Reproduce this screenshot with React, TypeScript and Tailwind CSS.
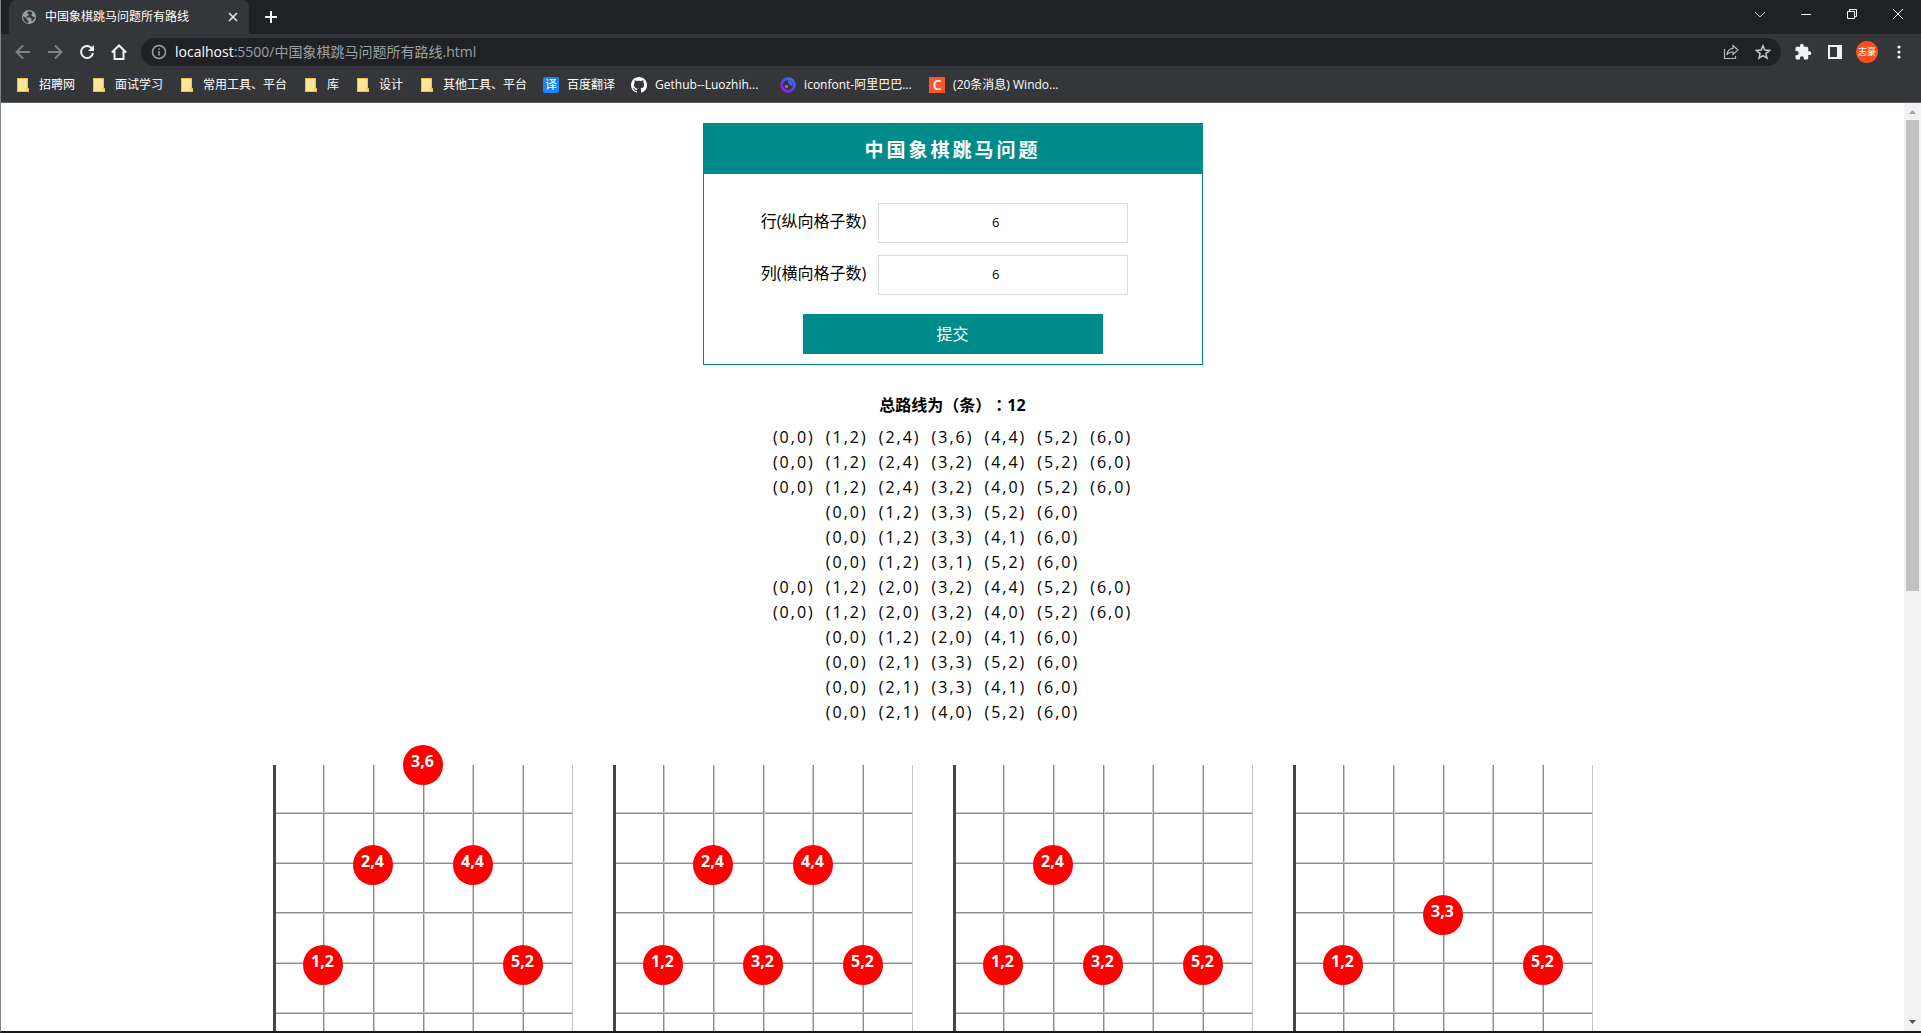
import React from "react";

type Point = [number, number];

const ROUTES: Point[][] = [
  [[0, 0], [1, 2], [2, 4], [3, 6], [4, 4], [5, 2], [6, 0]],
  [[0, 0], [1, 2], [2, 4], [3, 2], [4, 4], [5, 2], [6, 0]],
  [[0, 0], [1, 2], [2, 4], [3, 2], [4, 0], [5, 2], [6, 0]],
  [[0, 0], [1, 2], [3, 3], [5, 2], [6, 0]],
  [[0, 0], [1, 2], [3, 3], [4, 1], [6, 0]],
  [[0, 0], [1, 2], [3, 1], [5, 2], [6, 0]],
  [[0, 0], [1, 2], [2, 0], [3, 2], [4, 4], [5, 2], [6, 0]],
  [[0, 0], [1, 2], [2, 0], [3, 2], [4, 0], [5, 2], [6, 0]],
  [[0, 0], [1, 2], [2, 0], [4, 1], [6, 0]],
  [[0, 0], [2, 1], [3, 3], [5, 2], [6, 0]],
  [[0, 0], [2, 1], [3, 3], [4, 1], [6, 0]],
  [[0, 0], [2, 1], [4, 0], [5, 2], [6, 0]],
];

const CELL = 50;

function GlobeIcon() {
  return (
    <svg viewBox="0 0 16 16" className="size-4 shrink-0">
      <circle cx="8" cy="8" r="7" fill="#9aa0a6" />
      <path
        d="M2.2 7.2 5.6 9v1.6l1.8 1.2v2.4C4.4 13.9 2.2 11.2 2.2 8zM8.3 2.2C6.5 3 5.8 3.4 6.2 4.6l1.6.6-.6 1.6-2 .4L6.6 8.4h2.6l1.4 1.4-.4 2 1 .4c1.6-1.2 2.4-2.6 2.5-4.2l-2.3-.6-1.2-1.6 1.4-1.8C10.8 2.9 9.6 2.3 8.3 2.2z"
        fill="#35363a"
      />
    </svg>
  );
}

function FolderIcon() {
  return (
    <svg viewBox="0 0 16 16" className="size-4 shrink-0">
      <path d="M2 1h11v10h1v4H2z" fill="#e8c44d" />
      <path d="M3 2h9v9h-1v3H3z" fill="#ffe694" />
      <path d="M12 12h1v2h-1z" fill="#ffe694" />
    </svg>
  );
}

function GithubIcon() {
  return (
    <svg viewBox="0 0 16 16" className="size-4 shrink-0" fill="#fff">
      <path d="M8 0C3.580 0 0 3.580 0 8c0 3.540 2.290 6.530 5.470 7.590.4.070.550-.170.550-.380 0-.190-.010-.820-.010-1.490-2.010.370-2.530-.490-2.690-.940-.090-.230-.480-.940-.820-1.130-.280-.150-.680-.520-.010-.530.630-.010 1.080.580 1.230.820.720 1.210 1.870.870 2.330.660.070-.520.280-.870.510-1.070-1.780-.2-3.640-.890-3.640-3.950 0-.870.310-1.590.820-2.150-.080-.2-.360-1.020.080-2.120 0 0 .670-.210 2.200.820.640-.180 1.320-.270 2-.270s1.360.090 2 .270c1.530-1.040 2.200-.820 2.200-.820.440 1.100.160 1.920.080 2.120.510.560.820 1.270.820 2.150 0 3.070-1.870 3.750-3.650 3.950.290.250.540.730.540 1.480 0 1.070-.010 1.930-.010 2.200 0 .210.150.460.550.380A8.010 8.010 0 0 0 16 8c0-4.420-3.580-8-8-8" />
    </svg>
  );
}

function IconfontIcon() {
  return (
    <svg viewBox="0 0 16 16" className="size-4 shrink-0">
      <defs>
        <linearGradient id="ring" x1="1" y1="0" x2="0" y2="1">
          <stop offset="0" stopColor="#2f7df6" />
          <stop offset="0.5" stopColor="#5b3ff0" />
          <stop offset="1" stopColor="#a311f5" />
        </linearGradient>
      </defs>
      <circle cx="8" cy="8" r="6.4" fill="none" stroke="url(#ring)" strokeWidth="2.6" />
      <path d="M8 2.500a5.500 5.500 0 0 1 4.500 7L8.500 7z" fill="#3b63f3" />
      <circle cx="6.500" cy="9.500" r="1.700" fill="#e33fd0" />
    </svg>
  );
}

function TileIcon({ text, tone }: { text: string; tone: string }) {
  return (
    <span className={`flex size-4 shrink-0 items-center justify-center text-white ${tone}`}>{text}</span>
  );
}

const BOOKMARKS: { label: string; icon: React.ReactNode; long?: boolean }[] = [
  { label: "招聘网", icon: <FolderIcon /> },
  { label: "面试学习", icon: <FolderIcon /> },
  { label: "常用工具、平台", icon: <FolderIcon /> },
  { label: "库", icon: <FolderIcon /> },
  { label: "设计", icon: <FolderIcon /> },
  { label: "其他工具、平台", icon: <FolderIcon /> },
  { label: "百度翻译", icon: <TileIcon text="译" tone="rounded-xs bg-[#1a84f7] text-xs" /> },
  { label: "Gethub--Luozhih...", icon: <GithubIcon />, long: true },
  { label: "iconfont-阿里巴巴...", icon: <IconfontIcon />, long: true },
  {
    label: "(20条消息) Windo...",
    icon: <TileIcon text="C" tone="bg-[#fc5531] text-sm font-semibold" />,
    long: true,
  },
];

function TabStrip() {
  return (
    <div className="flex h-[34px] items-stretch bg-[#202124] pl-2">
      <div className="flex w-60 items-center gap-2 rounded-t-lg bg-[#35363a] pr-2 pl-3 text-xs text-white">
        <GlobeIcon />
        <span className="grow whitespace-nowrap">中国象棋跳马问题所有路线</span>
        <button aria-label="关闭标签页" className="flex size-4 items-center justify-center">
          <svg viewBox="0 0 16 16" className="size-4" stroke="#e8eaed" strokeWidth="1.6">
            <path d="M4 4l8 8M12 4l-8 8" />
          </svg>
        </button>
      </div>
      <button aria-label="新标签页" className="flex w-11 items-center justify-center">
        <svg viewBox="0 0 16 16" className="size-4" stroke="#fff" strokeWidth="2">
          <path d="M8 2v12M2 8h12" />
        </svg>
      </button>
      <div className="ml-auto flex h-7 text-white">
        <button aria-label="搜索标签页" className="flex w-[46px] items-center justify-center">
          <svg viewBox="0 0 12 12" className="size-3" fill="none" stroke="#c4c7cb">
            <path d="M1 4l5 5 5-5" />
          </svg>
        </button>
        <button aria-label="最小化" className="flex w-[46px] items-center justify-center">
          <svg viewBox="0 0 10 10" className="size-[10px]" stroke="currentColor">
            <path d="M0 5.500h10" />
          </svg>
        </button>
        <button aria-label="还原" className="flex w-[46px] items-center justify-center">
          <svg viewBox="0 0 10 10" className="size-[10px]" fill="none" stroke="currentColor">
            <path d="M.5 2.500h7v7h-7zM2.500 2.500v-2h7v7h-2" />
          </svg>
        </button>
        <button aria-label="关闭" className="flex w-[46px] items-center justify-center">
          <svg viewBox="0 0 10 10" className="size-[10px]" stroke="currentColor">
            <path d="M0 0l10 10M10 0L0 10" />
          </svg>
        </button>
      </div>
    </div>
  );
}

function ToolButton({ label, children }: { label: string; children: React.ReactNode }) {
  return (
    <button aria-label={label} className="flex size-8 shrink-0 items-center justify-center">
      {children}
    </button>
  );
}

function Toolbar() {
  return (
    <div className="flex h-9 items-center bg-[#35363a] pr-[6px] pl-[6px]">
      <ToolButton label="后退">
        <svg viewBox="0 0 16 16" className="size-4" fill="none" stroke="#808387" strokeWidth="1.8">
          <path d="M15 8H2M8 1.500L1.500 8 8 14.500" />
        </svg>
      </ToolButton>
      <ToolButton label="前进">
        <svg viewBox="0 0 16 16" className="size-4" fill="none" stroke="#808387" strokeWidth="1.8">
          <path d="M1 8h13M8 1.500L14.500 8 8 14.500" />
        </svg>
      </ToolButton>
      <ToolButton label="重新加载">
        <svg viewBox="0 0 16 16" className="size-4" fill="none" stroke="#f1f3f4" strokeWidth="2">
          <path d="M13.200 4.800A6 6 0 1 0 14 9" />
          <path d="M15 1v6H9z" fill="#f1f3f4" stroke="none" />
        </svg>
      </ToolButton>
      <ToolButton label="主页">
        <svg viewBox="0 0 16 16" className="size-4" fill="none" stroke="#f1f3f4" strokeWidth="2">
          <path d="M.8 8.500L8 1.500l7.200 7M3.500 7v8h9V7" />
        </svg>
      </ToolButton>
      <div className="ml-[6px] flex h-7 min-w-0 grow items-center rounded-full bg-[#202124] pr-[2px] pl-[10px] text-sm">
        <svg viewBox="0 0 16 16" className="mr-2 size-4 shrink-0" fill="none" stroke="#9aa0a6" strokeWidth="1.5">
          <circle cx="8" cy="8" r="6.5" />
          <path d="M8 7v4.500M8 4.200v1.600" />
        </svg>
        <span className="grow whitespace-nowrap text-[#9aa0a6]">
          <span className="text-white">localhost</span>:5500/中国象棋跳马问题所有路线.html
        </span>
        <ToolButton label="分享">
          <svg viewBox="0 0 16 16" className="size-4" fill="none" stroke="#b4b7bb" strokeWidth="1.2">
            <path d="M1.500 5v9.500h11V12M10 1.500L15 6l-5 4.500V8C7 8 5 9 3.800 11 4.200 7.500 6.500 4.800 10 4.400z" />
          </svg>
        </ToolButton>
        <ToolButton label="收藏">
          <svg viewBox="0 0 16 16" className="size-4" fill="none" stroke="#c4c7cb" strokeWidth="1.5">
            <path d="M8 1.800l1.800 4.300 4.700.4-3.600 3.100 1.100 4.600L8 11.700l-4 2.500 1.100-4.600L1.500 6.500l4.700-.4z" />
          </svg>
        </ToolButton>
      </div>
      <div className="flex pl-[6px]">
        <ToolButton label="扩展程序">
          <svg viewBox="0 0 24 24" className="size-[18px]" fill="#f1f3f4">
            <path d="M20.500 11H19V7c0-1.100-.9-2-2-2h-4V3.500a2.500 2.500 0 0 0-5 0V5H4c-1.100 0-2 .9-2 2v3.800h1.500a2.700 2.700 0 0 1 0 5.400H2V20c0 1.100.9 2 2 2h3.800v-1.500a2.700 2.700 0 0 1 5.400 0V22H17c1.100 0 2-.9 2-2v-4h1.500a2.500 2.500 0 0 0 0-5z" />
          </svg>
        </ToolButton>
        <ToolButton label="侧边栏">
          <svg viewBox="0 0 14 14" className="size-[14px]">
            <path fillRule="evenodd" d="M0 0h14v14H0zM2 2v10h7V2z" fill="#f1f3f4" />
          </svg>
        </ToolButton>
        <ToolButton label="个人资料">
          <span className="flex size-[22px] items-center justify-center rounded-full bg-[#f4511e] text-[9px] text-white">
            志豪
          </span>
        </ToolButton>
        <ToolButton label="菜单">
          <svg viewBox="0 0 4 14" className="h-[14px] w-1" fill="#f1f3f4">
            <circle cx="2" cy="2" r="1.6" />
            <circle cx="2" cy="7" r="1.6" />
            <circle cx="2" cy="12" r="1.6" />
          </svg>
        </ToolButton>
      </div>
    </div>
  );
}

function BookmarkBar() {
  return (
    <nav className="flex h-[33px] items-center gap-4 border-b border-[#5f6063] bg-[#35363a] pb-[2px] pl-[14px] text-xs text-white">
      {BOOKMARKS.map((b) => (
        <a key={b.label} href="#" className="flex items-center gap-2 whitespace-nowrap">
          {b.icon}
          <span className={b.long ? "min-w-[109px]" : ""}>{b.label}</span>
        </a>
      ))}
    </nav>
  );
}

function Field({ id, label }: { id: string; label: string }) {
  return (
    <div className="flex items-center justify-center gap-3 pr-4">
      <label htmlFor={id} className="pb-1">
        {label}
      </label>
      <input
        id={id}
        type="number"
        defaultValue={6}
        className="h-10 w-[250px] border border-[#dcdcdc] pb-[2px] text-center text-[13px] outline-none"
      />
    </div>
  );
}

function SizeForm() {
  return (
    <form
      onSubmit={(e) => e.preventDefault()}
      className="w-[500px] border border-[#008b8b] pb-[10px]"
    >
      <h3 className="flex h-[50px] items-center justify-center bg-[#008b8b] pt-[2px] text-[19px] font-bold tracking-[3px] text-white">
        中国象棋跳马问题
      </h3>
      <div className="flex flex-col gap-3 pt-[29px]">
        <Field id="rows" label="行(纵向格子数)" />
        <Field id="cols" label="列(横向格子数)" />
      </div>
      <button className="mx-auto mt-[19px] block h-10 w-[300px] bg-[#008b8b] text-white">提交</button>
    </form>
  );
}

function Board({ route }: { route: Point[] }) {
  return (
    <div className="relative h-[300px] w-[300px]">
      <svg viewBox="0 0 300 300" className="size-full" shapeRendering="crispEdges">
        {[50, 100, 150, 200, 250].map((v) => (
          <g key={v}>
            <path d={`M${v < 200 ? v : v - 1} 0h1v300h-1z`} fill={v < 200 ? "#8c8c8c" : "#cccccc"} />
            <path d={`M${v < 200 ? v + 1 : v} 0h1v300h-1z`} fill={v < 200 ? "#cccccc" : "#8c8c8c"} />
            <path d={`M3 ${v - 3}h297v1H3z`} fill={v === 150 ? "#8c8c8c" : "#cccccc"} />
            <path d={`M3 ${v - 2}h297v1H3z`} fill={v === 150 ? "#cccccc" : "#8c8c8c"} />
          </g>
        ))}
        <path d="M299 0h1v300h-1z" fill="#c4c4c4" />
        <path d="M0 0h3v300H0zM0 297h300v3H0z" fill="#45464b" />
      </svg>
      {route
        .filter(([, y]) => y > 0)
        .map(([x, y]) => (
          <span
            key={`${x},${y}`}
            className="absolute size-10 -translate-x-1/2 translate-y-1/2 rounded-full bg-[#ff0000] text-center leading-8 font-bold text-white"
            style={{ left: x * CELL, bottom: y * CELL }}
          >
            {x},{y}
          </span>
        ))}
    </div>
  );
}

function ScrollBar() {
  return (
    <div className="flex w-[17px] shrink-0 flex-col items-center bg-[#f1f1f1]">
      <svg viewBox="0 0 17 17" className="size-[17px] shrink-0">
        <path d="M5 11l3.500-4 3.500 4z" fill="#a3a3a3" />
      </svg>
      <div className="flex w-full grow flex-col px-[2px]">
        <div className="h-[52.7%] bg-[#c1c1c1]" />
      </div>
      <svg viewBox="0 0 17 17" className="size-[17px] shrink-0">
        <path d="M5 6l3.500 4L12 6z" fill="#505050" />
      </svg>
    </div>
  );
}

export default function App() {
  return (
    <div className="flex h-screen flex-col border-b-2 border-l border-b-[#17181a] border-l-[#7f8785] bg-white font-['Open_Sans','Noto_Sans_CJK_SC',sans-serif] text-base text-black">
      <header>
        <TabStrip />
        <Toolbar />
        <BookmarkBar />
      </header>
      <div className="flex min-h-0 grow">
        <main className="flex min-w-0 grow flex-col items-center overflow-hidden pt-5">
          <SizeForm />
          <h4 className="mt-[27px] leading-6 font-bold [text-spacing-trim:space-all]">
            总路线为（条）<span className="font-['Noto_Sans_CJK_TC',sans-serif]">：</span>12
          </h4>
          <ul className="mt-2">
            {ROUTES.map((route, i) => (
              <li key={i} className="flex justify-center gap-[11px] leading-[25px] tracking-[2px]">
                {route.map(([x, y]) => (
                  <span key={`${x},${y}`}>
                    ({x},{y})
                  </span>
                ))}
              </li>
            ))}
          </ul>
          <section className="mt-10 flex w-[1400px] shrink-0 flex-wrap gap-10 px-5">
            {ROUTES.slice(0, 4).map((route, i) => (
              <Board key={i} route={route} />
            ))}
          </section>
        </main>
        <ScrollBar />
      </div>
    </div>
  );
}
